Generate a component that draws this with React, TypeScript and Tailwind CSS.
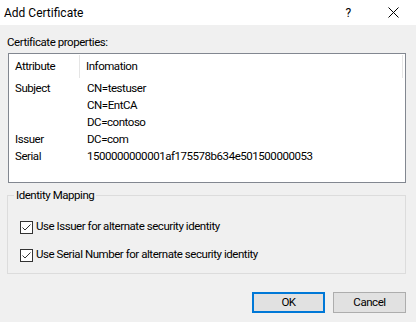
import React from 'react';

// rows of the certificate property list
const rows = [
  { attr: 'Subject', value: 'CN=testuser' },
  { attr: '', value: 'CN=EntCA' },
  { attr: '', value: 'DC=contoso' },
  { attr: 'Issuer', value: 'DC=com' },
  { attr: 'Serial', value: '1500000000001af175578b634e501500000053' },
];

const options = [
  'Use Issuer for alternate security identity',
  'Use Serial Number for alternate security identity',
];

function CheckBox() {
  return (
    <span className="w-[13px] h-[13px] border border-[#333333] bg-white flex items-center justify-center shrink-0">
      <svg width="11" height="11" viewBox="0 0 11 11">
        <path d="M1.5 5.5 L4 8 L9.5 2.5" fill="none" stroke="#333333" strokeWidth="1" />
      </svg>
    </span>
  );
}

export default function App() {
  return (
    <div className="w-[416px] h-[322px] bg-[#f0f0f0] flex flex-col text-[11.5px] tracking-[-0.45px] text-black font-['Roboto',sans-serif] leading-none">
      {/* title bar */}
      <div className="h-[25px] bg-white flex items-center shrink-0">
        <span className="pl-[4px] flex-1 text-[12px] tracking-normal">Add Certificate</span>
        <span className="w-[10px] text-center mr-[35px] text-[12px]">?</span>
        <svg width="11" height="11" viewBox="0 0 11 11" className="mr-[17px]">
          <path d="M0.5 0.5 L10.5 10.5 M10.5 0.5 L0.5 10.5" stroke="#000" strokeWidth="1" />
        </svg>
      </div>

      <div className="flex flex-col px-[7px]">
        <div className="h-[28px] flex items-end pb-[5px]">Certificate properties:</div>

        <div className="h-[130px] border border-[#828790] bg-white mr-[3px] ml-[1px]">
          <div className="h-[23px] mt-[1px] flex items-center">
            <span className="w-[71px] pl-[6px] self-stretch flex items-center border-r border-[#e5e5e5]">Attribute</span>
            <span className="flex-1 pl-[6px] self-stretch flex items-center border-r border-[#e5e5e5] mr-[2px]">Infomation</span>
          </div>
          <div className="mt-[2px] flex flex-col">
            {rows.map((r, i) => (
              <div key={i} className="h-[17px] flex items-center">
                <span className="w-[71px] pl-[6px]">{r.attr}</span>
                <span className="pl-[7px]">{r.value}</span>
              </div>
            ))}
          </div>
        </div>

        <fieldset className="mt-[7px] h-[84px] border border-[#dcdcdc] px-[6px] mr-[3px]">
          <legend className="px-[2px]">Identity Mapping</legend>
          <div className="flex flex-col gap-[15px] pl-[6px] pt-[19px]">
            {options.map((o) => (
              <label key={o} className="flex items-center gap-[3px]">
                <CheckBox />
                <span>{o}</span>
              </label>
            ))}
          </div>
        </fieldset>

        <div className="flex justify-end gap-[8px] mt-[18px] mr-[3px]">
          <button className="w-[73px] h-[21px] bg-[#e1e1e1] border-2 border-[#0078d7]">OK</button>
          <button className="w-[73px] h-[21px] bg-[#e1e1e1] border border-[#adadad]">Cancel</button>
        </div>
      </div>
    </div>
  );
}
